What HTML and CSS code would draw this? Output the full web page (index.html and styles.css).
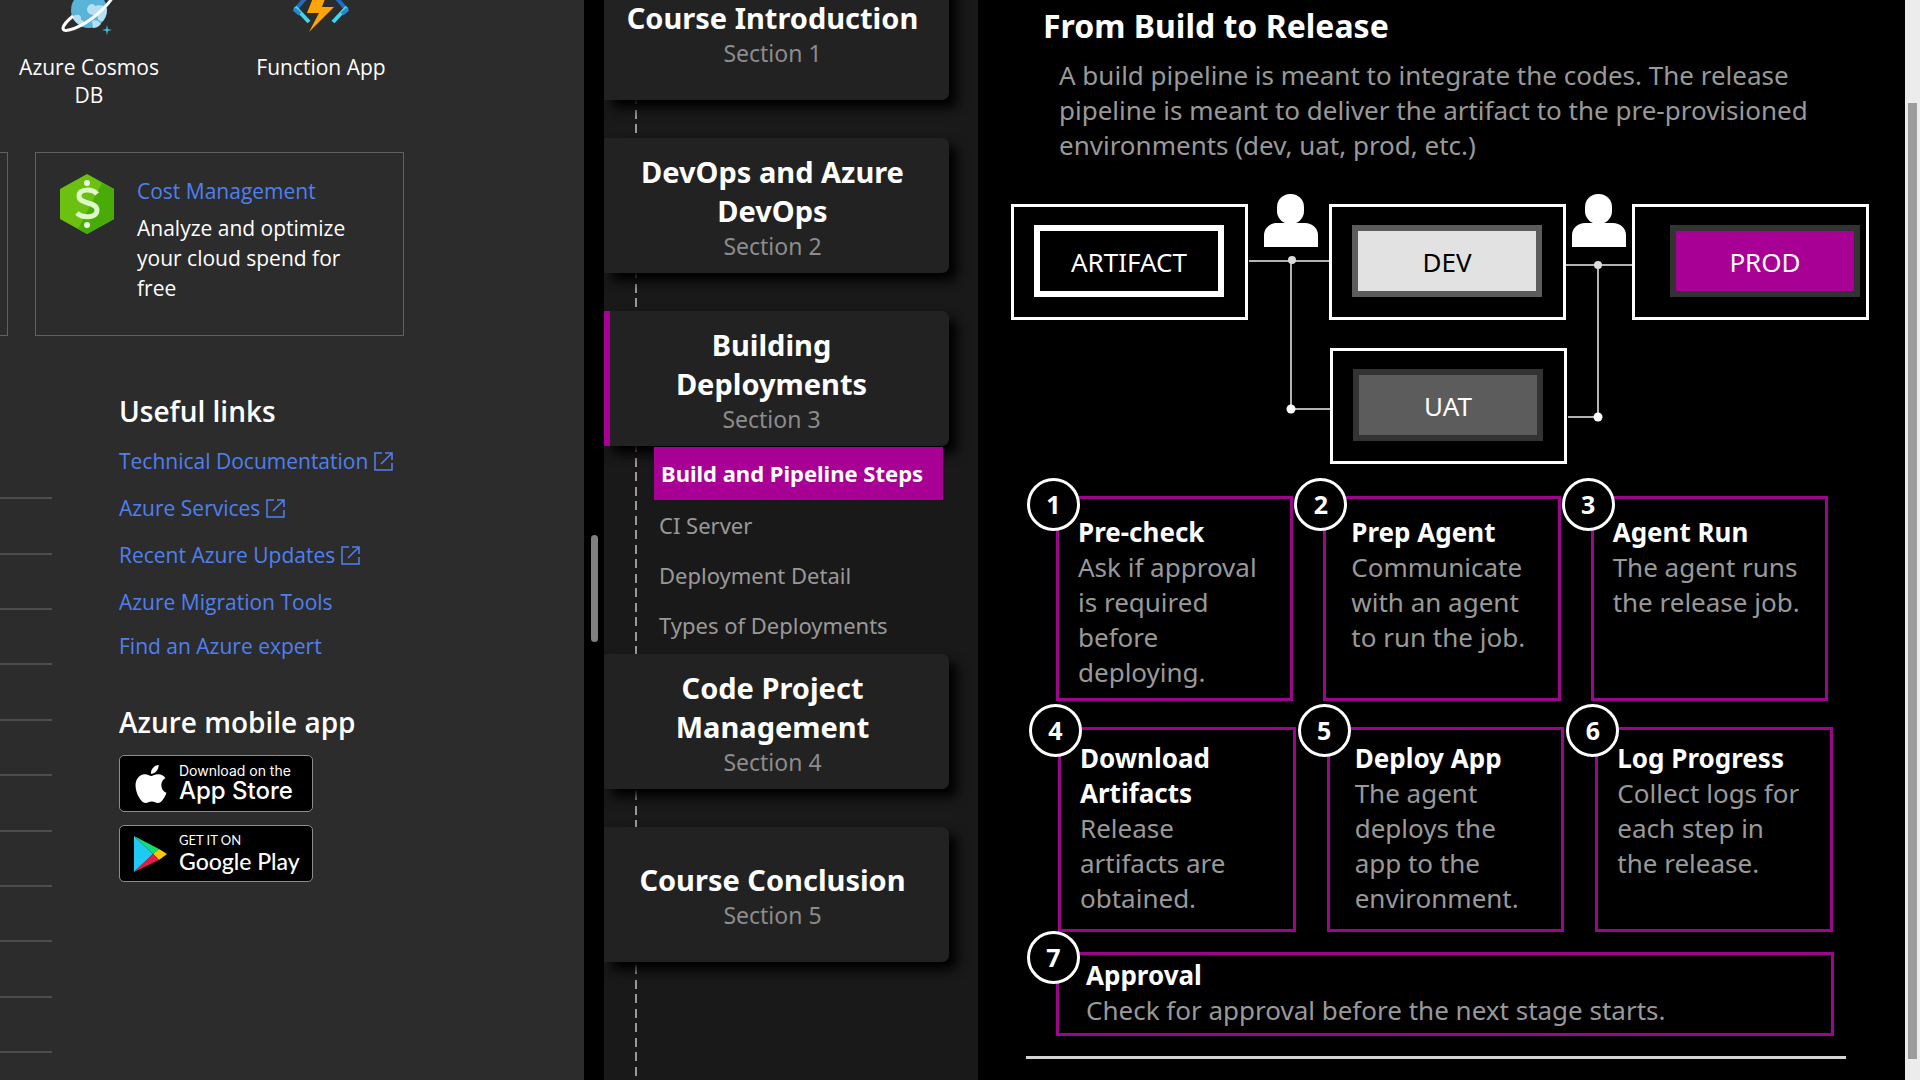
FILE: index.html
```html
<!DOCTYPE html>
<html lang="en">
<head>
<meta charset="utf-8">
<title>From Build to Release</title>
<link rel="stylesheet" href="styles.css">
</head>
<body>
<div class="page">
  <section class="portal">
    <div class="services">
      <a class="service" href="#">
        <svg class="service-icon" viewBox="0 0 60 60" aria-hidden="true">
          <circle cx="30" cy="30" r="18" fill="#5ab4da"/>
          <path d="M13 37c5-4 10-2 9 3 4 0 4 5 1 6-5-2-8-5-10-9zM28 29c1-6 7-6 8-3 5-2 10 0 12 3 0 6-2 9-4 12-5 1-6-3-5-6-6 1-11-1-11-6zM33 41c4-2 7 0 9 3-3 3-5 4-8 4z" fill="#b5e0f2"/>
          <path d="M14 36C2 46 1 52 10 50 24 47 44 32 54 17" fill="none" stroke="#fff" stroke-width="3"/>
          <path d="M48 45l1 4 4 1-4 1-1 4-1-4-4-1 4-1z" fill="#3fb4e0"/>
        </svg>
        <span>Azure Cosmos DB</span>
      </a>
      <a class="service" href="#">
        <svg class="service-icon" viewBox="0 0 60 60" aria-hidden="true">
          <path d="M17 15L5 29M43 15l12 14" fill="none" stroke="#1f6fc0" stroke-width="4"/>
          <path d="M4 27L18 42M56 27L42 42" fill="none" stroke="#3cd9ee" stroke-width="4"/>
          <path d="M3 29l6 5M57 29l-6 5" fill="none" stroke="#2b86d3" stroke-width="4"/>
          <path d="M26 8L16 33h12L18 52 43 27H31l7-19z" fill="#fca50a"/>
        </svg>
        <span>Function App</span>
      </a>
    </div>
    <div class="cards">
      <div class="card card-cut"></div>
      <article class="card">
        <svg class="cost-icon" viewBox="0 0 54 60" aria-hidden="true">
          <path d="M27 0l27 15v30L27 60 0 45V15z" fill="#6cc010"/>
          <path d="M27 0l27 15v30L27 60l-9-5L42 9z" fill="#48ab08"/>
          <circle cx="27" cy="9" r="3" fill="#eaffd8"/><circle cx="27" cy="51" r="3" fill="#eaffd8"/>
          <path d="M37 20c-4-5-18-6-18 2 0 9 18 5 18 14 0 9-15 8-20 3" fill="none" stroke="#dff8cb" stroke-width="5"/>
        </svg>
        <div>
          <a class="card-link" href="#">Cost Management</a>
          <p class="card-text">Analyze and optimize your cloud spend for free</p>
        </div>
      </article>
    </div>
    <div class="lower">
      <div class="rows">
        <i></i><i></i><i></i><i></i><i></i><i></i><i></i><i></i><i></i><i></i><i></i>
      </div>
      <div class="links">
        <h2>Useful links</h2>
        <ul>
          <li><a href="#">Technical Documentation <svg class="ext" viewBox="0 0 19 19"><path d="M8 1H1v17h17v-7M11 1h7v7M18 1L7 12"/></svg></a></li>
          <li><a href="#">Azure Services <svg class="ext" viewBox="0 0 19 19"><path d="M8 1H1v17h17v-7M11 1h7v7M18 1L7 12"/></svg></a></li>
          <li><a href="#">Recent Azure Updates <svg class="ext" viewBox="0 0 19 19"><path d="M8 1H1v17h17v-7M11 1h7v7M18 1L7 12"/></svg></a></li>
          <li><a href="#">Azure Migration Tools</a></li>
          <li><a href="#">Find an Azure expert</a></li>
        </ul>
        <h2>Azure mobile app</h2>
        <a class="store" href="#">
          <svg class="store-icon" viewBox="0 0 24 24" aria-hidden="true"><path fill="#fff" d="M12.152 6.896c-.948 0-2.415-1.078-3.96-1.04-2.04.027-3.91 1.183-4.961 3.014-2.117 3.675-.546 9.103 1.519 12.09 1.013 1.454 2.208 3.09 3.792 3.039 1.52-.065 2.09-.987 3.935-.987 1.831 0 2.35.987 3.96.948 1.637-.026 2.676-1.48 3.676-2.948 1.156-1.688 1.636-3.325 1.662-3.415-.039-.013-3.182-1.221-3.22-4.857-.026-3.04 2.48-4.494 2.597-4.559-1.429-2.09-3.623-2.324-4.39-2.376-2-.156-3.675 1.09-4.61 1.09zM15.53 3.83c.843-1.012 1.4-2.427 1.245-3.83-1.207.052-2.662.805-3.532 1.818-.78.896-1.454 2.338-1.273 3.714 1.338.104 2.715-.688 3.559-1.701"/></svg>
          <span class="store-text apple"><small>Download on the</small><b>App Store</b></span>
        </a>
        <a class="store" href="#">
          <svg class="store-icon" viewBox="0 0 38 38" aria-hidden="true">
            <path d="M2 1v36l19-18z" fill="#1fc8f5"/><path d="M2 1l25 13-6 5z" fill="#10e070"/>
            <path d="M27 14l8 5-8 6-6-6z" fill="#fcc80a"/><path d="M2 37l19-18 6 6z" fill="#e01f48"/>
          </svg>
          <span class="store-text google"><small>GET IT ON</small><b>Google Play</b></span>
        </a>
      </div>
    </div>
  </section>

  <div class="divider"><span class="grip"></span></div>

  <nav class="course">
    <a class="section" href="#"><strong>Course Introduction</strong><span>Section 1</span></a>
    <a class="section" href="#"><strong>DevOps and Azure DevOps</strong><span>Section 2</span></a>
    <div class="group">
      <a class="section section-open" href="#"><strong>Building Deployments</strong><span>Section 3</span></a>
      <ul class="topics">
        <li><a class="topic topic-active" href="#">Build and Pipeline Steps</a></li>
        <li><a class="topic" href="#">CI Server</a></li>
        <li><a class="topic" href="#">Deployment Detail</a></li>
        <li><a class="topic" href="#">Types of Deployments</a></li>
      </ul>
      <a class="section" href="#"><strong>Code Project Management</strong><span>Section 4</span></a>
    </div>
    <a class="section" href="#"><strong>Course Conclusion</strong><span>Section 5</span></a>
  </nav>

  <main class="lesson">
    <h1>From Build to Release</h1>
    <p class="intro">A build pipeline is meant to integrate the codes. The release pipeline is meant to deliver the artifact to the pre-provisioned environments (dev, uat, prod, etc.)</p>

    <div class="diagram">
      <svg class="wires" viewBox="0 0 860 273" aria-hidden="true">
        <g fill="none" stroke="#b4b4b4" stroke-width="2">
          <path d="M238 69h80M280 69v148h40M555 73h66M587 73v151M557 225h30"/>
        </g>
        <g fill="#fff">
          <circle cx="281" cy="68" r="4" fill="#dcdcdc"/><circle cx="280" cy="217" r="4.500"/>
          <circle cx="587" cy="73" r="4" fill="#dcdcdc"/><circle cx="587" cy="225" r="4.500"/>
          <rect x="266" y="2" width="27" height="30" rx="13"/><path d="M253 55V43c0-7 6-12 13-12h28c7 0 13 5 13 12v12z"/>
          <rect x="574" y="2" width="27" height="30" rx="13"/><path d="M561 55V43c0-7 6-12 13-12h28c7 0 13 5 13 12v12z"/>
        </g>
      </svg>
      <div class="node node-artifact"><span>ARTIFACT</span></div>
      <div class="node node-dev"><span>DEV</span></div>
      <div class="node node-prod"><span>PROD</span></div>
      <div class="node node-uat"><span>UAT</span></div>
    </div>

    <div class="steps steps-first">
      <section class="step"><b class="num">1</b><h3>Pre-check</h3><p>Ask if approval is required before deploying.</p></section>
      <section class="step step-mid"><b class="num">2</b><h3>Prep Agent</h3><p>Communicate with an agent to run the job.</p></section>
      <section class="step"><b class="num">3</b><h3>Agent Run</h3><p>The agent runs the release job.</p></section>
    </div>
    <div class="steps steps-second">
      <section class="step"><b class="num">4</b><h3>Download Artifacts</h3><p>Release artifacts are obtained.</p></section>
      <section class="step step-mid"><b class="num">5</b><h3>Deploy App</h3><p>The agent deploys the app to the environment.</p></section>
      <section class="step"><b class="num">6</b><h3>Log Progress</h3><p>Collect logs for each step in the release.</p></section>
    </div>
    <section class="step step-last"><b class="num">7</b><h3>Approval</h3><p>Check for approval before the next stage starts.</p></section>
    <hr>
  </main>

  <div class="scrollbar"><span></span></div>
</div>
</body>
</html>
```

FILE: styles.css
```css
* { box-sizing: border-box; }

body {
  margin: 0;
  background: #000;
  color: #fff;
  font-family: "Noto Sans", sans-serif;
}
h1, h2, h3, p, ul { margin: 0; padding: 0; }
ul { list-style: none; }
a { color: inherit; text-decoration: none; }

.page {
  display: grid;
  grid-template-columns: 584fr 20px 374px 927fr 15px;
  height: 100vh;
  overflow: hidden;
}

/* Portal pane */
.portal {
  display: flex;
  flex-direction: column;
  overflow: hidden;
  background: #2c2c2c;
  font-family: "Open Sans", sans-serif;
  font-size: 21px;
}
.services {
  display: flex;
  margin: -20px 0 0 -27px;
}
.service {
  display: flex;
  flex-direction: column;
  align-items: center;
  width: 232px;
  padding: 0 40px;
  line-height: 28px;
  text-align: center;
}
.service-icon { width: 60px; height: 60px; margin-bottom: 13px; }
.cards {
  display: flex;
  gap: 27px;
  margin-top: 43px;
}
.card {
  display: flex;
  gap: 23px;
  width: 369px;
  height: 184px;
  padding: 21px 24px;
  border: 1px solid #606060;
}
.card-cut {
  width: 8px;
  padding: 0;
  border-left: 0;
}
.cost-icon { flex: none; width: 54px; height: 60px; }
.card-link { display: block; line-height: 34px; color: #4f80f0; }
.card-text { margin-top: 5px; line-height: 30px; }

.lower { display: flex; flex: 1; gap: 67px; margin-top: 51px; }
.rows {
  display: flex;
  flex-direction: column;
  width: 52px;
  margin: 57px 0 27px;
}
.rows i { flex: 1; border-bottom: 2px solid #4d4d4d; }
.links h2 { font-size: 28px; font-weight: 600; line-height: 48px; }
.links ul { margin: 3px 0 32px; color: #4f80f0; }
.links li { line-height: 47px; }
.links li:last-child { line-height: 40px; }
.ext {
  width: 19px;
  height: 19px;
  vertical-align: -2px;
  fill: none;
  stroke: #4f80f0;
  stroke-width: 1.500;
}
.store {
  display: flex;
  align-items: center;
  gap: 9px;
  width: 194px;
  height: 57px;
  margin: 9px 0 13px;
  padding-left: 12px;
  border: 1px solid #8c8c8c;
  border-radius: 5px;
  background: #000;
}
.store-icon { width: 38px; height: 38px; }
.store-text { display: flex; flex-direction: column; }
.store small { line-height: 15px; }
.store b { font-weight: 500; line-height: 26px; }
.apple { font-family: Inter, sans-serif; }
.apple small { font-size: 14px; }
.apple b { font-size: 24px; }
.google { font-family: Lato, sans-serif; }
.google small { font-size: 13px; }
.google b { font-size: 23px; }

/* Divider between the panes */
.divider { display: flex; align-items: center; justify-content: center; }
.grip {
  width: 7px;
  height: 107px;
  margin-top: 97px;
  border-radius: 4px;
  background: #808080;
}

/* Course outline */
.course {
  display: flex;
  flex-direction: column;
  gap: 38px;
  overflow: hidden;
  margin-top: -35px;
  background:
    repeating-linear-gradient(#999 0 9px, transparent 9px 14px, #999 14px 23px, transparent 23px 29px) 31px 0 / 2px 100% no-repeat,
    #191919;
}
.section {
  position: relative;
  display: flex;
  flex-direction: column;
  align-items: center;
  justify-content: center;
  width: 345px;
  height: 135px;
  padding: 2px 24px 0 16px;
  border-radius: 0 7px 7px 0;
  background: #222;
  box-shadow: 8px 8px 12px #000;
  text-align: center;
}
.section strong { font-size: 29px; line-height: 39px; }
.section span { font-size: 23px; line-height: 32px; color: #8c8c8c; }
.section-open { border-left: 6px solid #a80095; padding-left: 8px; }
.topics { position: relative; padding: 1px 35px 4px 50px; }
.topic {
  display: block;
  padding-left: 5px;
  font-size: 22px;
  line-height: 50px;
  color: #999;
}
.topic-active {
  padding-left: 7px;
  background: #a80095;
  color: #fff;
  font-weight: 700;
  line-height: 53px;
}

/* Lesson */
h1 { padding: 6px 0 0 65px; font-size: 32px; line-height: 40px; }
.intro {
  max-width: 850px;
  padding: 12px 0 0 81px;
  font-size: 26px;
  line-height: 35px;
  color: #999;
}
.diagram {
  position: relative;
  width: 860px;
  height: 273px;
  margin: 29px 0 31px 33px;
}
.wires { position: absolute; inset: 0; width: 860px; height: 273px; }
.node {
  position: absolute;
  width: 237px;
  height: 116px;
  padding: 18px 20px;
  border: 3px solid #fff;
}
.node span {
  display: block;
  width: 190px;
  height: 72px;
  border: 6px solid #333;
  font-size: 26px;
  line-height: 62px;
  text-align: center;
}
.node-artifact { left: 0; top: 12px; }
.node-artifact span { border-color: #fff; }
.node-dev { left: 318px; top: 12px; }
.node-dev span { border-color: #5c5c5c; background: #e2e2e2; color: #000; }
.node-prod { left: 621px; top: 12px; padding-left: 35px; }
.node-prod span { background: #a80095; }
.node-uat { left: 319px; top: 156px; }
.node-uat span { background: #5c5c5c; }

.steps { display: grid; grid-template-columns: repeat(3, 1fr); }
.steps-first { gap: 30px; margin: 0 77px 0 78px; --num-top: -21px; --pad-top: 16px; }
.steps-second { gap: 31px; margin: 26px 72px 20px 80px; --num-top: -26px; --pad-top: 11px; }
.step {
  position: relative;
  min-height: 205px;
  padding: var(--pad-top) 0 0 19px;
  border: 3px solid #9c068c;
  font-size: 26px;
  line-height: 35px;
}
.step-mid { padding-left: 25px; }
.step h3 { max-width: 190px; font-size: 26px; }
.step p { max-width: 190px; color: #999; }
.step-last {
  --num-top: -24px;
  --pad-top: 3px;
  min-height: 84px;
  margin: 0 71px 0 78px;
  padding-left: 27px;
}
.step-last p { max-width: none; }
.num {
  position: absolute;
  left: -32px;
  top: var(--num-top);
  width: 53px;
  height: 53px;
  border: 3px solid #fff;
  border-radius: 50%;
  background: #000;
  font-size: 25px;
  line-height: 47px;
  text-align: center;
}
hr { height: 3px; margin: 20px 59px 0 48px; border: 0; background: #d4d4d4; }

.scrollbar { display: flex; padding: 103px 3px 21px; background: #ececec; }
.scrollbar span { flex: 1; background: #9c9c9c; }
```
